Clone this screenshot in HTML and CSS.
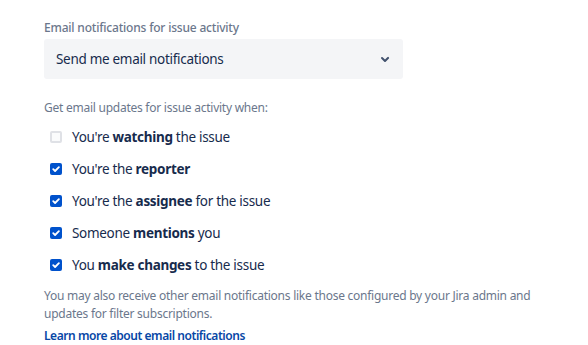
FILE: index.html
```html
<!DOCTYPE html>
<html>
<head>
<meta charset="utf-8">
<link rel="stylesheet" href="styles.css">
</head>
<body>
<div class="page">
  <div class="label">Email notifications for issue activity</div>
  <div class="select">
    <span class="select-value">Send me email notifications</span>
    <svg class="chevron" width="24" height="24" viewBox="0 0 24 24"><path d="M8.3 10.3a1 1 0 0 1 1.4 0L12 12.6l2.3-2.3a1 1 0 1 1 1.4 1.4l-3 3a1 1 0 0 1-1.4 0l-3-3a1 1 0 0 1 0-1.4z" fill="#42526E"/></svg>
  </div>
  <div class="helper">Get email updates for issue activity when:</div>
  <ul class="options">
    <li class="option"><span class="box"></span><span>You're <b>watching</b> the issue</span></li>
    <li class="option"><span class="box checked"><svg viewBox="0 0 12 12" width="12" height="12"><path d="M3.2 6.1l1.9 1.9 3.8-3.9" fill="none" stroke="#fff" stroke-width="1.8" stroke-linecap="round" stroke-linejoin="round"/></svg></span><span>You're the <b>reporter</b></span></li>
    <li class="option"><span class="box checked"><svg viewBox="0 0 12 12" width="12" height="12"><path d="M3.2 6.1l1.9 1.9 3.8-3.9" fill="none" stroke="#fff" stroke-width="1.8" stroke-linecap="round" stroke-linejoin="round"/></svg></span><span>You're the <b>assignee</b> for the issue</span></li>
    <li class="option"><span class="box checked"><svg viewBox="0 0 12 12" width="12" height="12"><path d="M3.2 6.1l1.9 1.9 3.8-3.9" fill="none" stroke="#fff" stroke-width="1.8" stroke-linecap="round" stroke-linejoin="round"/></svg></span><span>Someone <b>mentions</b> you</span></li>
    <li class="option"><span class="box checked"><svg viewBox="0 0 12 12" width="12" height="12"><path d="M3.2 6.1l1.9 1.9 3.8-3.9" fill="none" stroke="#fff" stroke-width="1.8" stroke-linecap="round" stroke-linejoin="round"/></svg></span><span>You <b>make changes</b> to the issue</span></li>
  </ul>
  <p class="footer">You may also receive other email notifications like those configured by your Jira admin and updates for filter subscriptions.</p>
  <a class="link" href="#">Learn more about email notifications</a>
</div>
</body>
</html>
```
FILE: styles.css
```css
html, body {
  margin: 0;
  padding: 0;
  background: #ffffff;
}
body {
  font-family: "Noto Sans", "Open Sans", sans-serif;
  color: #172B4D;
}
.page {
  padding: 20px 0 0 44px;
  width: 490px;
}
.label {
  font-size: 12px;
  line-height: 16px;
  letter-spacing: -0.2px;
  color: #6B778C;
  font-weight: 500;
}
.select {
  margin-top: 3px;
  width: 359px;
  height: 40px;
  box-sizing: border-box;
  background: #F4F5F7;
  border-radius: 3px;
  display: flex;
  align-items: center;
  justify-content: space-between;
  padding: 0 6px 0 12px;
}
.select-value {
  font-size: 13.5px;
  letter-spacing: -0.3px;
  color: #172B4D;
}
.chevron {
  display: block;
}
.helper {
  margin-top: 21px;
  font-size: 12px;
  line-height: 16px;
  letter-spacing: -0.25px;
  color: #6B778C;
}
.options {
  list-style: none;
  margin: 5px 0 0 0;
  padding: 0;
}
.option {
  height: 32px;
  display: flex;
  align-items: center;
  font-size: 13.5px;
  letter-spacing: -0.3px;
  color: #172B4D;
}
.option b {
  font-weight: 700;
}
.box {
  width: 12px;
  height: 12px;
  box-sizing: border-box;
  border: 2px solid #DFE1E6;
  background: #FAFBFC;
  border-radius: 2px;
  margin: 0 10px 0 6px;
  flex: none;
}
.box.checked {
  background: #0052CC;
  border: none;
}
.box svg {
  display: block;
}
.footer {
  margin: 6px 0 0 0;
  font-size: 12px;
  line-height: 18px;
  letter-spacing: -0.25px;
  color: #6B778C;
}
.link {
  display: block;
  margin-top: 4px;
  font-size: 12px;
  line-height: 18px;
  letter-spacing: -0.45px;
  color: #0747A6;
  font-weight: 600;
  text-decoration: none;
}
```
